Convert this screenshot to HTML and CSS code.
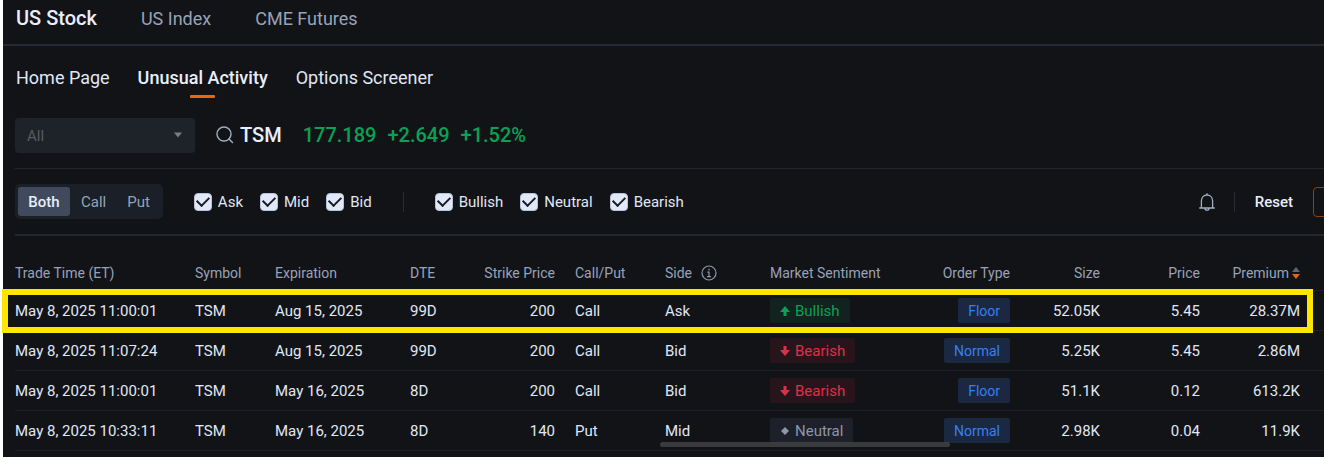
FILE: index.html
```html
<!DOCTYPE html>
<html lang="en">
<head>
  <meta charset="UTF-8" />
  <meta name="viewport" content="width=device-width, initial-scale=1.0" />
  <title>Unusual Activity</title>
  <link rel="stylesheet" href="styles.css">
</head>
<body>
  <div class="app">
    <nav class="market-nav">
      <a href="#" class="active">US Stock</a>
      <a href="#">US Index</a>
      <a href="#">CME Futures</a>
    </nav>

    <nav class="page-nav">
      <a href="#">Home Page</a>
      <a href="#" class="active">Unusual Activity</a>
      <a href="#">Options Screener</a>
    </nav>

    <div class="search-bar">
      <div class="select-wrap">
        <select class="select" aria-label="Watchlist">
          <option>All</option>
        </select>
        <svg class="caret" width="8" height="6" viewBox="0 0 8 6"><path d="M0 0.5h8L4 5.5z" fill="#767d8a"/></svg>
      </div>
      <div class="quote">
        <svg width="18" height="18" viewBox="0 0 18 18" fill="none" stroke="#a3adc2" stroke-width="1.4" stroke-linecap="round"><circle cx="8" cy="8" r="7"/><path d="M13 13l3.5 3.5"/></svg>
        <span class="ticker">TSM</span>
        <span class="up">177.189</span>
        <span class="up">+2.649</span>
        <span class="up">+1.52%</span>
      </div>
    </div>

    <div class="filters">
      <div class="segment">
        <button class="seg-btn active">Both</button>
        <button class="seg-btn">Call</button>
        <button class="seg-btn">Put</button>
      </div>
      <div class="checks">
        <label class="check"><input type="checkbox" checked>Ask</label>
        <label class="check"><input type="checkbox" checked>Mid</label>
        <label class="check"><input type="checkbox" checked>Bid</label>
      </div>
      <span class="divider"></span>
      <div class="checks">
        <label class="check"><input type="checkbox" checked>Bullish</label>
        <label class="check"><input type="checkbox" checked>Neutral</label>
        <label class="check"><input type="checkbox" checked>Bearish</label>
      </div>
      <div class="actions">
        <button class="icon-btn" aria-label="Alerts">
          <svg width="16" height="18" viewBox="0 0 16 18" fill="none" stroke="#a3adc2" stroke-width="1.3" stroke-linecap="round" stroke-linejoin="round"><path d="M8 0.7v1.1M2.4 14.6V7.8C2.4 4.4 4.8 2 8 2s5.600 2.400 5.600 5.800v6.800M0.700 15h14.600M6 15.200c0 1.300.8 2 2 2s2-.7 2-2"/></svg>
        </button>
        <span class="divider"></span>
        <button class="reset-btn">Reset</button>
        <button class="apply-btn" aria-label="Apply"></button>
      </div>
    </div>

    <div class="table-wrap">
      <table class="trades">
        <colgroup>
          <col class="c-time"><col class="c-symbol"><col class="c-exp"><col class="c-dte"><col class="c-strike"><col class="c-type">
          <col class="c-side"><col class="c-sentiment"><col class="c-order"><col class="c-size"><col class="c-price"><col class="c-premium"><col>
        </colgroup>
        <thead>
          <tr>
            <th>Trade Time (ET)</th>
            <th>Symbol</th>
            <th>Expiration</th>
            <th>DTE</th>
            <th class="num">Strike Price</th>
            <th>Call/Put</th>
            <th><span class="th-flex side-head">Side
              <svg width="16" height="16" viewBox="0 0 16 16" fill="none" stroke="#8e97a9" stroke-width="1.2"><circle cx="8" cy="8" r="7"/><path d="M8 3.800v1.600M6.300 7.200H8v4.200M6 11.600h4"/></svg></span></th>
            <th>Market Sentiment</th>
            <th class="num">Order Type</th>
            <th class="num">Size</th>
            <th class="num">Price</th>
            <th class="num"><span class="th-flex sort-head">Premium
              <svg width="8" height="12" viewBox="0 0 8 12"><path d="M4 0l4 5H0z" fill="#5f6673"/><path d="M0 7h8l-4 5z" fill="#e8640c"/></svg></span></th>
            <th></th>
          </tr>
        </thead>
        <tbody>
          <tr>
            <td>May 8, 2025 11:00:01</td>
            <td>TSM</td>
            <td>Aug 15, 2025</td>
            <td>99D</td>
            <td class="num">200</td>
            <td>Call</td>
            <td>Ask</td>
            <td><span class="tag bullish"><svg width="10" height="10" viewBox="0 0 10 10"><path d="M5 0l5 6H6.500v4h-3V6H0z"/></svg>Bullish</span></td>
            <td class="num"><span class="tag order">Floor</span></td>
            <td class="num">52.05K</td>
            <td class="num">5.45</td>
            <td class="num">28.37M</td>
            <td></td>
          </tr>
          <tr>
            <td>May 8, 2025 11:07:24</td>
            <td>TSM</td>
            <td>Aug 15, 2025</td>
            <td>99D</td>
            <td class="num">200</td>
            <td>Call</td>
            <td>Bid</td>
            <td><span class="tag bearish"><svg width="10" height="10" viewBox="0 0 10 10"><path d="M5 10L0 4h3.500V0h3v4H10z"/></svg>Bearish</span></td>
            <td class="num"><span class="tag order">Normal</span></td>
            <td class="num">5.25K</td>
            <td class="num">5.45</td>
            <td class="num">2.86M</td>
            <td></td>
          </tr>
          <tr>
            <td>May 8, 2025 11:00:01</td>
            <td>TSM</td>
            <td>May 16, 2025</td>
            <td>8D</td>
            <td class="num">200</td>
            <td>Call</td>
            <td>Bid</td>
            <td><span class="tag bearish"><svg width="10" height="10" viewBox="0 0 10 10"><path d="M5 10L0 4h3.500V0h3v4H10z"/></svg>Bearish</span></td>
            <td class="num"><span class="tag order">Floor</span></td>
            <td class="num">51.1K</td>
            <td class="num">0.12</td>
            <td class="num">613.2K</td>
            <td></td>
          </tr>
          <tr>
            <td>May 8, 2025 10:33:11</td>
            <td>TSM</td>
            <td>May 16, 2025</td>
            <td>8D</td>
            <td class="num">140</td>
            <td>Put</td>
            <td>Mid</td>
            <td><span class="tag neutral"><svg width="10" height="10" viewBox="0 0 10 10"><path d="M5 1l4 4-4 4-4-4z"/></svg>Neutral</span></td>
            <td class="num"><span class="tag order">Normal</span></td>
            <td class="num">2.98K</td>
            <td class="num">0.04</td>
            <td class="num">11.9K</td>
            <td></td>
          </tr>
        </tbody>
      </table>
      <div class="row-frame"></div>
      <div class="scroll-thumb"></div>
    </div>
  </div>
</body>
</html>
```

FILE: styles.css
```css
* {
  box-sizing: border-box;
}

body {
  margin: 0;
  background-color: #fff;
  font-family: Roboto, "Liberation Sans", sans-serif;
  font-size: 15px;
  color: #e0e7f5;
  overflow: hidden;
}

a {
  color: inherit;
  text-decoration: none;
}

button {
  font-family: inherit;
  font-size: 15px;
  border: none;
  background: none;
  cursor: pointer;
}

.app {
  margin-left: 3px;
  min-height: 100vh;
  background-color: #121317;
}

/* navigation */
.market-nav {
  display: flex;
  align-items: center;
  gap: 44px;
  height: 46px;
  padding: 0 13px 8px;
  font-size: 18px;
  color: #98a2b8;
  border-bottom: 2px solid #252a35;
}

.market-nav .active {
  font-size: 20px;
  font-weight: 500;
  color: #e8eefc;
}

.page-nav {
  display: flex;
  gap: 28px;
  padding: 20px 13px 0;
  font-size: 18px;
  line-height: 24px;
}

.page-nav .active {
  font-weight: 500;
  color: #e8eefc;
}

.page-nav .active::after {
  content: "";
  display: block;
  width: 25px;
  height: 3px;
  margin: 5px auto 0;
  border-radius: 1px;
  background-color: #ea670c;
}

/* symbol search */
.search-bar {
  display: flex;
  align-items: center;
  gap: 21px;
  margin-left: 12px;
  padding: 20px 0 15px;
  border-bottom: 1px solid #22252b;
}

.select-wrap {
  position: relative;
  width: 180px;
}

.select {
  display: block;
  width: 100%;
  height: 35px;
  padding: 0 12px;
  border: none;
  border-radius: 4px;
  appearance: none;
  background-color: #1e2229;
  color: #585c64;
  font-family: inherit;
  font-size: 15px;
}

.caret {
  position: absolute;
  top: 14px;
  right: 13px;
  pointer-events: none;
}

.quote {
  display: flex;
  align-items: center;
  gap: 11px;
  padding-bottom: 1px;
  font-size: 20px;
  font-weight: 500;
  color: #e8eefc;
}

.quote svg {
  margin-right: -5px;
}

.ticker {
  margin-right: 10px;
}

.up {
  color: #0aa154;
}

/* filters */
.filters {
  display: flex;
  align-items: center;
  gap: 31px;
  margin-left: 12px;
  padding: 15px 0;
  border-bottom: 2px solid #22262d;
  overflow: hidden;
}

.segment {
  display: flex;
  gap: 1px;
  padding: 3px;
  border-radius: 5px;
  background-color: #1b1f27;
}

.seg-btn {
  height: 29px;
  padding: 0 10px;
  border-radius: 3px;
  color: #98a2b8;
}

.seg-btn.active {
  min-width: 52px;
  background-color: #414a5c;
  color: #e8eefc;
  font-weight: 500;
}

.checks {
  display: flex;
  gap: 17px;
}

.check {
  display: flex;
  align-items: center;
  gap: 6px;
}

.check input {
  display: grid;
  place-items: center;
  width: 18px;
  height: 18px;
  margin: 0;
  appearance: none;
  border: 1px solid #b9c2d6;
  border-radius: 4px;
  background-color: #e0e8fa;
}

.check input:checked::before {
  content: "";
  width: 10px;
  height: 6px;
  margin-bottom: 3px;
  border-left: 2px solid #17191e;
  border-bottom: 2px solid #17191e;
  transform: rotate(-45deg);
}

.divider {
  width: 1px;
  height: 20px;
  background-color: #282c34;
}

.actions {
  display: flex;
  align-items: center;
  gap: 19px;
  margin-left: auto;
  margin-right: -69px;
}

.icon-btn {
  display: flex;
  padding: 0;
}

.reset-btn {
  padding: 0 1px;
  color: #e8eefc;
  font-weight: 500;
}

.apply-btn {
  width: 80px;
  height: 30px;
  border: 1px solid #8a420f;
  border-radius: 4px;
}

/* trades table */
.table-wrap {
  position: relative;
  margin-left: 12px;
  padding-top: 20px;
}

.trades {
  width: 100%;
  table-layout: fixed;
  border-collapse: separate;
  border-spacing: 0;
}

.c-time { width: 170px; }
.c-symbol { width: 80px; }
.c-exp { width: 135px; }
.c-dte { width: 65px; }
.c-strike { width: 100px; }
.c-type { width: 90px; }
.c-side { width: 105px; }
.c-sentiment { width: 130px; }
.c-order { width: 130px; }
.c-size { width: 90px; }
.c-price { width: 100px; }
.c-premium { width: 100px; }

.trades th,
.trades td {
  height: 40px;
  padding: 0 10px;
  border-bottom: 1px solid #1d2026;
  text-align: left;
  vertical-align: middle;
  white-space: nowrap;
}

.trades th {
  height: 35px;
  font-size: 14px;
  font-weight: 400;
  color: #98a2b8;
}

.trades th:first-child,
.trades td:first-child {
  padding-left: 0;
}

.trades th:last-child,
.trades td:last-child {
  padding: 0;
}

.trades .num {
  text-align: right;
}

.th-flex {
  display: inline-flex;
  align-items: center;
}

.side-head {
  gap: 9px;
}

.sort-head {
  gap: 3px;
}

.tag {
  display: inline-flex;
  align-items: center;
  gap: 5px;
  height: 25px;
  padding: 0 10px;
  border-radius: 2px;
  vertical-align: middle;
}

.tag svg {
  fill: currentColor;
}

.bullish {
  background-color: #11221f;
  color: #0aa154;
}

.bearish {
  background-color: #28151b;
  color: #e02f49;
}

.neutral {
  background-color: #1d2029;
  color: #8e97a9;
}

.order {
  background-color: #1a2842;
  color: #3a7ff0;
  font-size: 14px;
}

/* frame around the first trade */
.row-frame {
  position: absolute;
  top: 53px;
  left: -13px;
  right: 11px;
  height: 44px;
  border: 6px solid #ffe600;
}

.scroll-thumb {
  position: absolute;
  left: 645px;
  bottom: 4px;
  width: 290px;
  height: 5px;
  border-radius: 3px;
  background-color: rgba(75, 76, 79, 0.7);
}
```
